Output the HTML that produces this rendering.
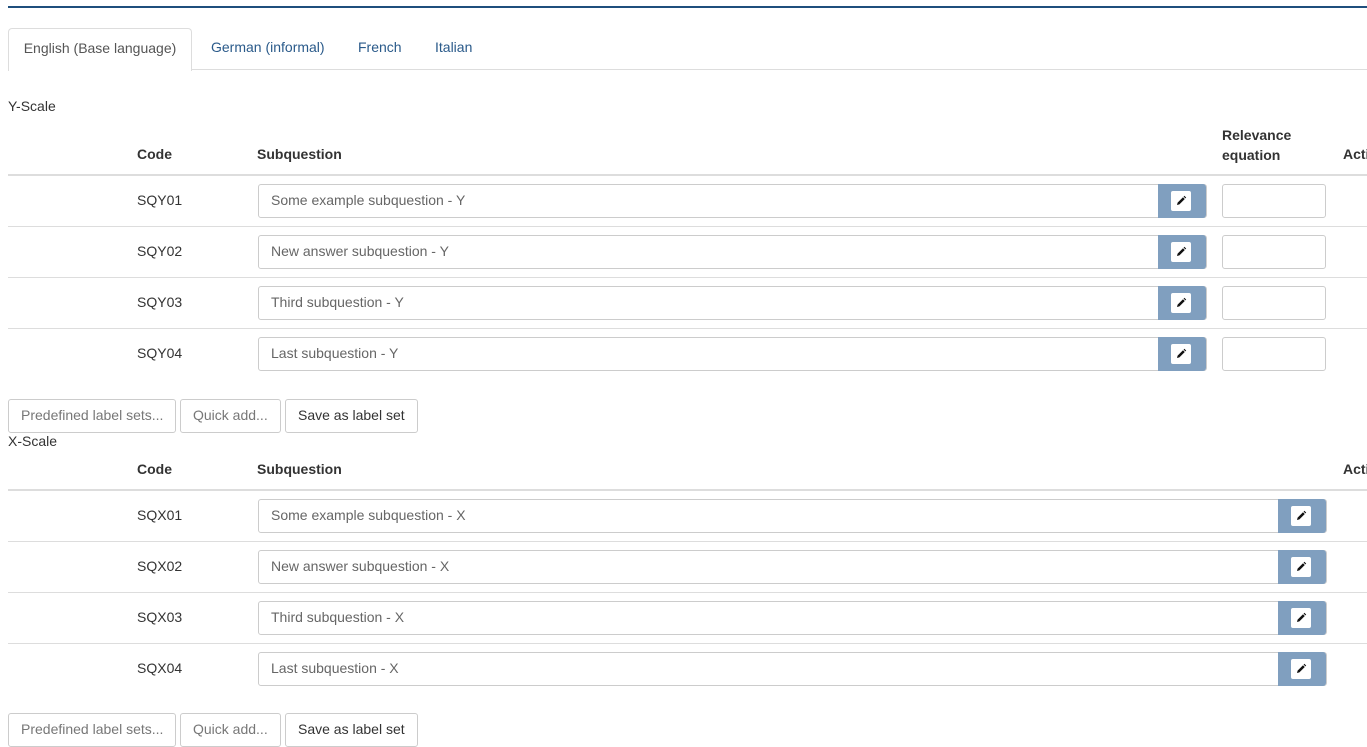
<!DOCTYPE html><html><head><style>
body{margin:0;width:1367px;height:732px;overflow:hidden;background:#fff;font-family:"Liberation Sans",sans-serif;font-size:14px;color:#333;position:relative}
.a{position:absolute}
.hl{position:absolute;left:8px;right:0;height:1px;background:#ddd}
.th{position:absolute;font-weight:bold;color:#333}
.inp{position:absolute;height:32px;border:1px solid #ccc;border-radius:3px;background:#fff;color:#666;line-height:30px;padding-left:12px;box-sizing:content-box}
.btn{position:absolute;width:48px;height:34px;background:#809fbf;border-radius:0 3px 3px 0}
.btn i{position:absolute;left:13px;top:7px;width:20px;height:20px;background:#fff;border-radius:2px}
.btn svg{position:absolute;left:4px;top:4px}
.b{position:absolute;height:32px;border:1px solid #ccc;border-radius:3px;line-height:30px;padding:0 12px;color:#777;background:#fff}
</style></head><body>
<div class="a" style="left:8px;right:0;top:6px;height:2px;background:#1f4f7d"></div>
<div class="a" style="left:192px;right:0;top:69px;height:1px;background:#ddd"></div>
<div class="a" style="left:8px;top:28px;width:182px;height:42px;border:1px solid #ddd;border-bottom:none;border-radius:4px 4px 0 0;background:#fff;line-height:38px;text-align:center;color:#555">English (Base language)</div>
<div class="a" style="left:211px;top:39px;color:#2a5a8a">German (informal)</div>
<div class="a" style="left:358px;top:39px;color:#2a5a8a">French</div>
<div class="a" style="left:435px;top:39px;color:#2a5a8a">Italian</div>
<div class="a" style="left:8px;top:98px">Y-Scale</div>
<div class="th" style="left:137px;top:146px">Code</div>
<div class="th" style="left:257px;top:146px">Subquestion</div>
<div class="th" style="left:1222px;top:125px;line-height:20px">Relevance<br>equation</div>
<div class="th" style="left:1343px;top:146px">Action</div>
<div class="hl" style="top:174px;height:2px"></div>
<div id="y"></div>
<div class="b" style="left:8px;top:399px">Predefined label sets...</div>
<div class="b" style="left:180px;top:399px">Quick add...</div>
<div class="b" style="left:285px;top:399px;color:#333">Save as label set</div>
<div class="a" style="left:8px;top:433px">X-Scale</div>
<div class="th" style="left:137px;top:461px">Code</div>
<div class="th" style="left:257px;top:461px">Subquestion</div>
<div class="th" style="left:1343px;top:461px">Action</div>
<div class="hl" style="top:489px;height:2px"></div>
<div id="x"></div>
<div class="b" style="left:8px;top:713px">Predefined label sets...</div>
<div class="b" style="left:180px;top:713px">Quick add...</div>
<div class="b" style="left:285px;top:713px;color:#333">Save as label set</div>
<script>
var P='<svg width="12" height="12" viewBox="0 0 12 12"><path d="M2 10 L2.6 7.6 L8 2.2 L9.8 4 L4.4 9.4 Z M8.6 1.6 L9.4 0.8 L11.2 2.6 L10.4 3.4 Z" fill="#111"/></svg>';
function rows(id,top,pre,suf,w){var h='',t=['Some example subquestion','New answer subquestion','Third subquestion','Last subquestion'];
for(var i=0;i<4;i++){var y=top+i*51;
h+='<div class="a" style="left:137px;top:'+(y+16)+'px">'+pre+'0'+(i+1)+'</div>';
h+='<div class="inp" style="left:258px;top:'+(y+8)+'px;width:'+(w-13)+'px">'+t[i]+' - '+suf+'</div>';
h+='<div class="btn" style="left:'+(258+w-48)+'px;top:'+(y+8)+'px"><i>'+P+'</i></div>';
if(suf=='Y')h+='<div class="inp" style="left:1222px;top:'+(y+8)+'px;width:90px;padding-left:12px"></div>';
if(i<3)h+='<div class="hl" style="top:'+(y+50)+'px"></div>';}
document.getElementById(id).innerHTML=h;}
rows('y',176,'SQY','Y',948);rows('x',491,'SQX','X',1068);
</script>
</body></html>
